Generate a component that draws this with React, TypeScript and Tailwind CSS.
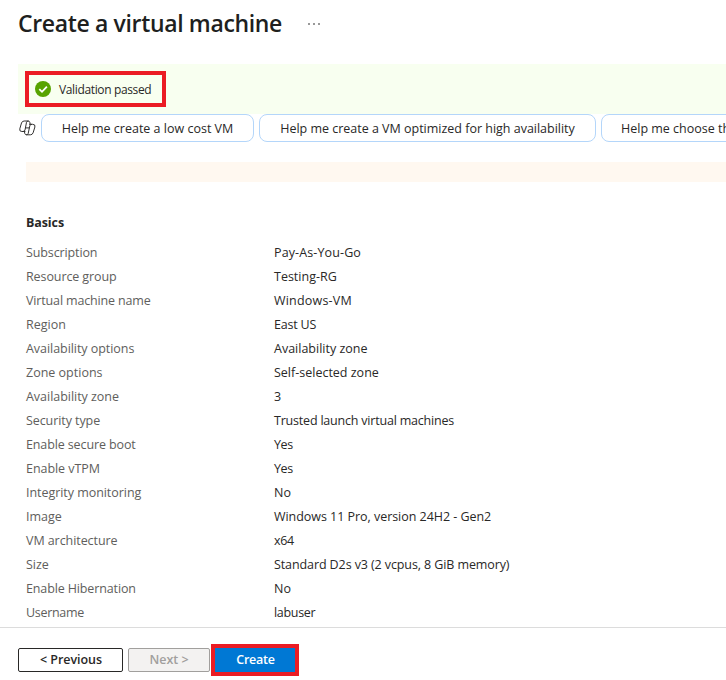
import React from "react";

type Row = { label: string; value: string; labelClass?: string; valueClass?: string };

const rows: Row[] = [
  { label: "Subscription", value: "Pay-As-You-Go", labelClass: "tracking-[-0.12px]", valueClass: "tracking-[0.12px]" },
  { label: "Resource group", value: "Testing-RG", labelClass: "tracking-[-0.1px]" },
  { label: "Virtual machine name", value: "Windows-VM", labelClass: "tracking-[-0.15px]", valueClass: "tracking-[0.2px]" },
  { label: "Region", value: "East US", valueClass: "tracking-[-0.2px]" },
  { label: "Availability options", value: "Availability zone", labelClass: "tracking-[-0.05px]" },
  { label: "Zone options", value: "Self-selected zone" },
  { label: "Availability zone", value: "3", labelClass: "tracking-[-0.03px]" },
  { label: "Security type", value: "Trusted launch virtual machines", labelClass: "tracking-[-0.08px]", valueClass: "tracking-[-0.2px]" },
  { label: "Enable secure boot", value: "Yes", labelClass: "tracking-[-0.12px]", valueClass: "tracking-[-0.4px]" },
  { label: "Enable vTPM", value: "Yes", labelClass: "tracking-[-0.05px]", valueClass: "tracking-[-0.4px]" },
  { label: "Integrity monitoring", value: "No", labelClass: "tracking-[-0.05px]" },
  { label: "Image", value: "Windows 11 Pro, version 24H2 - Gen2", valueClass: "tracking-[-0.04px]" },
  { label: "VM architecture", value: "x64", labelClass: "tracking-[-0.07px]", valueClass: "tracking-[-0.3px]" },
  { label: "Size", value: "Standard D2s v3 (2 vcpus, 8 GiB memory)", valueClass: "tracking-[-0.1px]" },
  { label: "Enable Hibernation", value: "No", labelClass: "tracking-[-0.13px]" },
  { label: "Username", value: "labuser", labelClass: "tracking-[-0.3px]", valueClass: "tracking-[-0.3px]" },
];

function CheckIcon() {
  return (
    <svg className="size-4 shrink-0" viewBox="0 0 16 16" fill="none">
      <circle cx="8" cy="8" r="8" fill="#57a300" />
      <path d="M4.3 8.1 7 10.8l4.9-5.2" stroke="#fff" strokeWidth="1.8" />
    </svg>
  );
}

function CopilotIcon() {
  return (
    <svg className="h-4 w-[17px] shrink-0" viewBox="0 0 17 16" fill="none" stroke="#323130" strokeWidth="1" strokeLinejoin="round" strokeLinecap="round">
      <path d="M6 11.5H2.9Q.1 11.5.8 8.8L2.5 3Q3.2 1 5.2 1H9.1Q10.4 1 10.8 2.3L11.2 4.3" />
      <path d="M9.1 1Q7.9 1 7.5 2.3L6 10Q5.6 11.5 4.2 11.5" />
      <path d="M10.5 4.3H13.6Q16.6 4.3 15.9 7L14.1 12.8Q13.4 14.8 11.4 14.8H7.5Q6.2 14.8 5.8 13.5L5.4 11.5" />
      <path d="M7.5 14.8Q8.8 14.8 9.2 13.5L10.8 5.8Q11.2 4.3 12.6 4.3" />
      <path d="M6.5 7.9H10.2" />
    </svg>
  );
}

export default function App() {
  return (
    <div className="flex h-[680px] w-[726px] flex-col overflow-hidden bg-white font-['Open_Sans','Noto_Sans',sans-serif] text-[12.5px] text-[#292827]">
      <header className="flex h-16 shrink-0 items-start pl-[18px] pt-[7px]">
        <h1 className="w-[290px] whitespace-nowrap text-[23px] leading-8 font-semibold tracking-[-0.35px] text-[#201f1e]">Create a virtual machine</h1>
        <div className="flex gap-[3px] pt-4">
          <i className="size-[2px] bg-[#999]" />
          <i className="size-[2px] bg-[#999]" />
          <i className="size-[2px] bg-[#999]" />
        </div>
      </header>

      <div className="ml-[18px] h-[50px] shrink-0 bg-[#f8fff0] pl-[7px] pt-[7px]">
        <div className="flex h-9 w-[141px] items-center gap-2 border-4 border-[#eb1c24] pl-1.5 text-[12px] tracking-[-0.36px] whitespace-nowrap">
          <CheckIcon />
          <span className="pt-0.5">Validation passed</span>
        </div>
      </div>

      <div className="flex h-7 shrink-0 items-center gap-[5px] pl-[19px] whitespace-nowrap">
        <CopilotIcon />
        <button className="h-7 w-[213px] shrink-0 rounded-lg border border-[#b4d6fa] pt-0.5">Help me create a low cost VM</button>
        <button className="h-7 w-[337px] shrink-0 rounded-lg border border-[#b4d6fa] pt-0.5 tracking-[-0.01px]">Help me create a VM optimized for high availability</button>
        <button className="h-7 w-[330px] shrink-0 rounded-lg border border-[#b4d6fa] pt-0.5 pl-[19px] text-left">Help me choose the right VM size</button>
      </div>

      <div className="mt-5 ml-[26px] h-5 shrink-0 bg-[#fff8f0]" />

      <main className="flex-1 overflow-hidden pt-[31px] pl-[26px] whitespace-nowrap">
        <h2 className="mb-2 h-5 leading-5 font-bold tracking-[-0.1px]">Basics</h2>
        <dl>
          {rows.map((r) => (
            <div key={r.label} className="flex h-6 leading-6">
              <dt className="w-[248px] text-[#605e5c]">
                <span className={r.labelClass}>{r.label}</span>
              </dt>
              <dd>
                <span className={r.valueClass}>{r.value}</span>
              </dd>
            </div>
          ))}
        </dl>
      </main>

      <footer className="flex h-[53px] shrink-0 items-start border-t border-[#dcdcdc] pt-4 pl-[18px] font-semibold">
        <button className="mt-1 mr-[5px] h-6 w-[105px] rounded-xs border border-[#292827] pl-px leading-none tracking-[-0.05px]">&lt; Previous</button>
        <button className="mt-1 mr-px h-6 w-[82px] rounded-xs border border-[#a19f9d] bg-[#f3f2f1] leading-none text-[#a19f9d]">Next &gt;</button>
        <button className="h-8 w-[88px] border-4 border-[#eb1c24] bg-[#0078d4] pl-px leading-none tracking-[-0.25px] text-white">Create</button>
      </footer>
    </div>
  );
}
